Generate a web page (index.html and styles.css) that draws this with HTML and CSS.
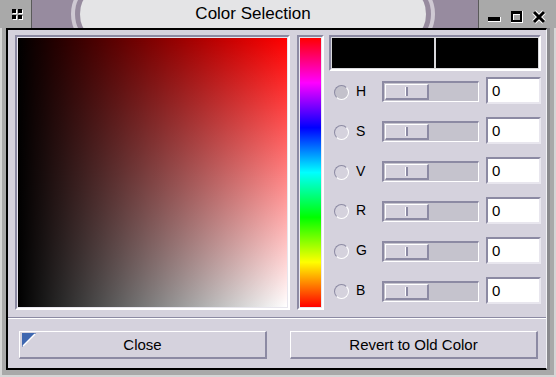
FILE: index.html
```html
<!DOCTYPE html>
<html lang="en">
<head>
    <meta charset="UTF-8">
    <meta name="viewport" content="width=device-width, initial-scale=1.0">
    <title>Color Selection</title>
    <link rel="stylesheet" href="styles.css">
</head>
<body>

<div class="window">
    <!-- Title bar -->
    <div class="titlebar">
        <div class="tb-menu">
            <span class="menu-icon"><i></i><i></i><i></i><i></i></span>
        </div>
        <div class="tb-title">
            <div class="tb-pill">Color Selection</div>
        </div>
        <div class="tb-buttons">
            <svg width="77" height="28" viewBox="0 0 77 28">
                <!-- minimize -->
                <rect x="9" y="17" width="13" height="5" fill="#ffffff"/>
                <rect x="9" y="17" width="12" height="4" fill="#000000"/>
                <!-- maximize -->
                <rect x="32" y="11" width="12" height="12" fill="#ffffff"/>
                <rect x="32" y="11" width="11" height="11" fill="#000000"/>
                <rect x="34" y="14" width="7" height="6" fill="#ffffff"/>
                <rect x="35" y="15" width="6" height="5" fill="#a9a9a9"/>
                <!-- close -->
                <path d="M55 12 L65 22 M65 12 L55 22" stroke="#ffffff" stroke-width="5"/>
                <path d="M55 12 L65 22 M65 12 L55 22" stroke="#000000" stroke-width="3"/>
            </svg>
        </div>
    </div>

    <div class="frame">
        <div class="body">
            <div class="main">
                <!-- Saturation / value area -->
                <div class="sunken sv-frame"><div class="sv"></div></div>
                <!-- Hue strip -->
                <div class="sunken hue-frame"><div class="hue"></div></div>

                <div class="controls">
                    <div class="sunken preview">
                        <div class="swatch"></div>
                        <div class="swatch"></div>
                    </div>
                    <div class="rows">
                        <div class="row">
                            <span class="radio on"></span><span class="label">H</span>
                            <div class="slider"><div class="thumb"><span></span></div></div>
                            <div class="field">0</div>
                        </div>
                        <div class="row">
                            <span class="radio"></span><span class="label">S</span>
                            <div class="slider"><div class="thumb"><span></span></div></div>
                            <div class="field">0</div>
                        </div>
                        <div class="row">
                            <span class="radio"></span><span class="label">V</span>
                            <div class="slider"><div class="thumb"><span></span></div></div>
                            <div class="field">0</div>
                        </div>
                        <div class="row">
                            <span class="radio"></span><span class="label">R</span>
                            <div class="slider"><div class="thumb"><span></span></div></div>
                            <div class="field">0</div>
                        </div>
                        <div class="row">
                            <span class="radio"></span><span class="label">G</span>
                            <div class="slider"><div class="thumb"><span></span></div></div>
                            <div class="field">0</div>
                        </div>
                        <div class="row">
                            <span class="radio"></span><span class="label">B</span>
                            <div class="slider"><div class="thumb"><span></span></div></div>
                            <div class="field">0</div>
                        </div>
                    </div>
                </div>
            </div>

            <div class="separator"></div>

            <!-- Buttons -->
            <div class="actions">
                <button class="btn focused">
                    <svg class="focus-mark" width="14" height="14" viewBox="0 0 14 14">
                        <polygon points="0,0 14,0 0,14" fill="#3f67b0"/>
                        <path d="M1 13 L13 1" stroke="#ffffff" stroke-width="1.5"/>
                    </svg>
                    Close
                </button>
                <button class="btn">Revert to Old Color</button>
            </div>
        </div>
    </div>
</div>

</body>
</html>
```

FILE: styles.css
```css
* {
    box-sizing: border-box;
}
body {
    margin: 0;
    font-family: "Liberation Sans", Arial, sans-serif;
    background: #ffffff;
}
.window {
    width: 556px;
    height: 377px;
    background-color: #a9a9a9;
    overflow: hidden;
}

/* title bar */
.titlebar {
    height: 28px;
    display: flex;
    overflow: hidden;
}
.tb-menu {
    width: 32px;
    background-color: #a9a9a9;
    border-right: 1px solid #5a5a5a;
    display: flex;
    align-items: center;
    padding-left: 12px;
}
.menu-icon {
    display: grid;
    grid-template-columns: 4px 4px;
    gap: 2px;
}
.menu-icon i {
    width: 4px;
    height: 4px;
    background-color: #000000;
    box-shadow: 1px 1px 0 #ffffff;
}
.tb-title {
    flex: 1;
    background-color: #978b9f;
    border-right: 1px solid #5a5a5a;
    padding-left: 48px;
    overflow: hidden;
}
.tb-pill {
    width: 346px;
    height: 34px;
    margin-top: -3px;
    background-color: #e4e4e6;
    border-radius: 8px / 17px;
    box-shadow: 0 0 0 5px #978b9f, 0 0 0 9px #cfc9d3;
    text-align: center;
    font-size: 17px;
    line-height: 34px;
    color: #000000;
}
.tb-buttons {
    width: 77px;
    background-color: #a9a9a9;
}
.tb-buttons svg {
    display: block;
}

/* window frame */
.frame {
    height: 349px;
    border-left: 2px solid #d6d6d6;
    border-right: 2px solid #d6d6d6;
    border-bottom: 2px solid #d6d6d6;
    padding: 0 7px 5px 4px;
}
.body {
    height: 342px;
    background-color: #d5d2dd;
    border-top: 2px solid #000000;
    border-left: 2px solid #000000;
    border-bottom: 2px solid #000000;
    border-right: 1px solid #f2f2f6;
    box-shadow: 3px 0 0 #8a8a8e;
}
.main {
    display: flex;
    gap: 7px;
    padding: 5px 5px 0 7px;
    height: 280px;
}
.sunken {
    border: 2px solid;
    border-color: #8c8aa3 #ffffff #ffffff #8c8aa3;
    padding: 1px;
    background-color: #e8e6ee;
}
.sv-frame {
    width: 275px;
    height: 275px;
}
.sv {
    width: 100%;
    height: 100%;
    background: linear-gradient(to right, #000000, rgba(0, 0, 0, 0)),
                linear-gradient(to bottom, #ff0000, #ffffff);
}
.hue-frame {
    width: 27px;
    height: 275px;
}
.hue {
    width: 100%;
    height: 100%;
    background: linear-gradient(to bottom, #ff0000, #ff00ff, #0000ff, #00ffff, #00ff00, #ffff00, #ff0000);
}
.controls {
    width: 212px;
    margin-left: -2px;
    display: flex;
    flex-direction: column;
}
.preview {
    height: 36px;
    display: flex;
    gap: 2px;
    background-color: #d8d8dc;
}
.swatch {
    flex: 1;
    background-color: #000000;
}
.rows {
    flex: 1;
    display: flex;
    flex-direction: column;
}
.row {
    flex: 1;
    display: flex;
    align-items: center;
    padding-left: 5px;
}
.radio {
    width: 15px;
    height: 15px;
    border-radius: 50%;
    border: 1px solid;
    border-color: #8c8aa3 #ffffff #ffffff #8c8aa3;
    margin-top: 3px;
}
.radio.on {
    background-color: #c3c1cb;
}
.label {
    width: 33px;
    padding-left: 7px;
    font-size: 14px;
    color: #000000;
}
.slider {
    width: 97px;
    height: 21px;
    border: 2px solid;
    border-color: #8c8aa3 #ffffff #ffffff #8c8aa3;
    border-width: 2px 1px 1px 2px;
    background-color: #c5c3cd;
    padding: 1px 0 0 1px;
    margin-top: 2px;
}
.thumb {
    width: 44px;
    height: 16px;
    background-color: #d5d2dd;
    border: 1px solid;
    border-color: #ffffff #8c8aa3 #8c8aa3 #ffffff;
    border-width: 1px 2px 2px 1px;
    display: flex;
    align-items: center;
    justify-content: center;
}
.thumb span {
    width: 3px;
    height: 9px;
    border-left: 1px solid #ffffff;
    border-right: 2px solid #8c8aa3;
}
.field {
    width: 55px;
    height: 27px;
    margin-left: 7px;
    background-color: #ffffff;
    border: 2px solid;
    border-color: #8c8aa3 #e8e6ee #e8e6ee #8c8aa3;
    padding-left: 4px;
    font-size: 15px;
    line-height: 23px;
    color: #000000;
}

.separator {
    margin-top: 7px;
    height: 2px;
    border-top: 1px solid #8c8aa3;
    border-bottom: 1px solid #ffffff;
}
.actions {
    display: flex;
    gap: 23px;
    padding: 12px 8px 0 11px;
}
.btn {
    position: relative;
    width: 248px;
    height: 28px;
    background-color: #d5d2dd;
    border: solid;
    border-color: #ffffff #8c8aa3 #8c8aa3 #ffffff;
    border-width: 1px 2px 2px 1px;
    font-family: "Liberation Sans", Arial, sans-serif;
    font-size: 15px;
    color: #000000;
    padding: 0;
}
.focus-mark {
    position: absolute;
    left: 2px;
    top: 1px;
}
```
